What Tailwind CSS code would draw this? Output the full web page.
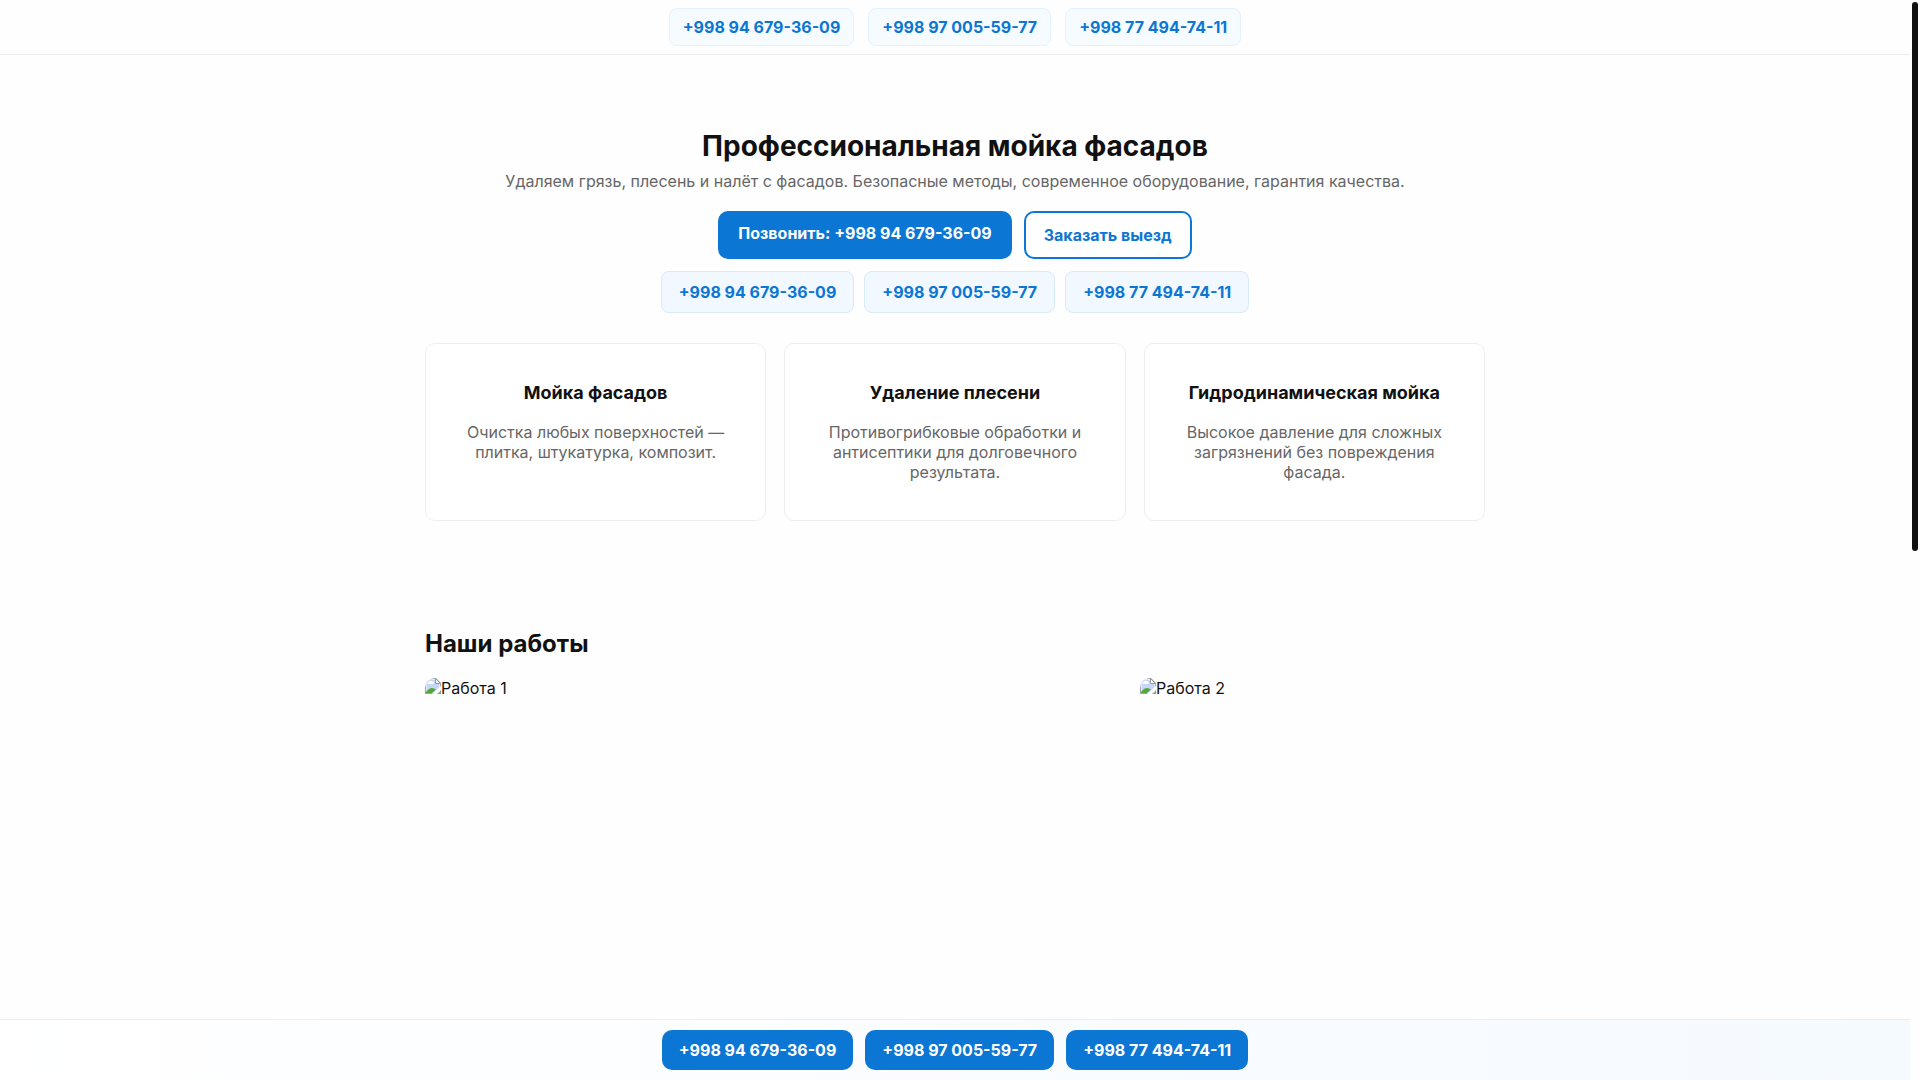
<!DOCTYPE html>
<html lang="ru">
<head>
    <meta charset="utf-8" />
    <meta name="viewport" content="width=device-width, initial-scale=1" />
    <script src="https://cdn.jsdelivr.net/npm/@tailwindcss/browser@4"></script>
    <title>Профессиональная мойка фасадов</title>
</head>
<body class="h-screen overflow-hidden flex bg-[#fefefe] font-['Inter',sans-serif] text-base leading-5 text-[#111]">

    <div class="flex-1 min-w-0 flex flex-col">
        <header class="flex justify-center gap-3.5 py-2 border-b border-[#eee] font-bold text-[#0b76d3]">
            <a href="tel:+998946793609" class="px-[13px] py-2 rounded-lg border border-[#e3f2fd] bg-[#f6fbff]">+998 94 679-36-09</a>
            <a href="tel:+998970055977" class="px-[13px] py-2 rounded-lg border border-[#e3f2fd] bg-[#f6fbff]">+998 97 005-59-77</a>
            <a href="tel:+998774947411" class="px-[13px] py-2 rounded-lg border border-[#e3f2fd] bg-[#f6fbff]">+998 77 494-74-11</a>
        </header>

        <main class="flex-1 min-h-0 w-full max-w-[1100px] mx-auto px-5">
            <section class="pt-[74px] text-center">
                <h1 class="text-[28px] leading-[34px] font-bold">Профессиональная мойка фасадов</h1>
                <p class="mt-2 text-[#666]">Удаляем грязь, плесень и налёт с фасадов. Безопасные методы, современное оборудование, гарантия качества.</p>

                <div class="mt-5 flex justify-center gap-3 font-bold">
                    <a href="tel:+998946793609" class="px-5 py-3 rounded-[10px] bg-[#0b76d3] text-white">Позвонить: +998 94 679-36-09</a>
                    <a href="#order" class="px-[18px] py-3 rounded-[10px] border-2 border-[#0b76d3] bg-white text-[#0b76d3]">Заказать выезд</a>
                </div>

                <div class="mt-3 flex justify-center gap-2.5 font-bold text-[#0b76d3]">
                    <a href="tel:+998946793609" class="px-[17px] py-2.5 rounded-lg border border-[#d6eaf8] bg-[#f1f8ff]">+998 94 679-36-09</a>
                    <a href="tel:+998970055977" class="px-[17px] py-2.5 rounded-lg border border-[#d6eaf8] bg-[#f1f8ff]">+998 97 005-59-77</a>
                    <a href="tel:+998774947411" class="px-[17px] py-2.5 rounded-lg border border-[#d6eaf8] bg-[#f1f8ff]">+998 77 494-74-11</a>
                </div>

                <div class="mt-[30px] grid grid-cols-3 gap-[18px]">
                    <article class="px-9 pt-[37px] pb-[38px] rounded-[10px] border border-[#eee] bg-white">
                        <h3 class="text-lg leading-6 font-bold">Мойка фасадов</h3>
                        <p class="mt-[17px] text-[#666]">Очистка любых поверхностей — плитка, штукатурка, композит.</p>
                    </article>
                    <article class="px-9 pt-[37px] pb-[38px] rounded-[10px] border border-[#eee] bg-white">
                        <h3 class="text-lg leading-6 font-bold">Удаление плесени</h3>
                        <p class="mt-[17px] text-[#666]">Противогрибковые обработки и антисептики для долговечного результата.</p>
                    </article>
                    <article class="px-9 pt-[37px] pb-[38px] rounded-[10px] border border-[#eee] bg-white">
                        <h3 class="text-lg leading-6 font-bold">Гидродинамическая мойка</h3>
                        <p class="mt-[17px] text-[#666]">Высокое давление для сложных загрязнений без повреждения фасада.</p>
                    </article>
                </div>
            </section>

            <section class="pt-[108px]">
                <h2 class="text-2xl leading-[30px] font-bold">Наши работы</h2>
                <div class="mt-[19px] grid grid-cols-[703fr_345fr] gap-3">
                    <div class="flex items-start rounded-t-[10px] overflow-hidden">
                        <svg class="size-4 shrink-0" viewBox="0 0 16 16" aria-hidden="true">
                            <path d="M0 0h11l5 5v11H0z" fill="#a0a4a8" />
                            <path d="M1 1h9.500l4.500 4.500V15H1z" fill="#fff" />
                            <path d="M1.500 1.500h9v4h4V15h-13z" fill="#c6d6fb" />
                            <path d="M3 6a1.300 1.300 0 0 1 .8-2.300 1.900 1.900 0 0 1 3.400 0A1.200 1.200 0 0 1 8 6z" fill="#fff" />
                            <path d="M1 15v-1c2-2.600 4-4 6-4 1.500 0 2.800.7 3.800 1.800L7 15z" fill="#57a639" />
                            <path d="M7 16l9-8v4l-4 4z" fill="#fff" />
                            <path d="M12.500 16l3.500-3.500V16z" fill="#8fa08a" />
                            <path d="M10.500.5v5h5z" fill="#fff" stroke="#999" />
                        </svg>
                        <span>Работа 1</span>
                    </div>
                    <div class="flex items-start rounded-t-[10px] overflow-hidden">
                        <svg class="size-4 shrink-0" viewBox="0 0 16 16" aria-hidden="true">
                            <path d="M0 0h11l5 5v11H0z" fill="#a0a4a8" />
                            <path d="M1 1h9.500l4.500 4.500V15H1z" fill="#fff" />
                            <path d="M1.500 1.500h9v4h4V15h-13z" fill="#c6d6fb" />
                            <path d="M3 6a1.300 1.300 0 0 1 .8-2.300 1.900 1.900 0 0 1 3.400 0A1.200 1.200 0 0 1 8 6z" fill="#fff" />
                            <path d="M1 15v-1c2-2.600 4-4 6-4 1.500 0 2.800.7 3.800 1.800L7 15z" fill="#57a639" />
                            <path d="M7 16l9-8v4l-4 4z" fill="#fff" />
                            <path d="M12.500 16l3.500-3.500V16z" fill="#8fa08a" />
                            <path d="M10.500.5v5h5z" fill="#fff" stroke="#999" />
                        </svg>
                        <span>Работа 2</span>
                    </div>
                </div>
            </section>
        </main>

        <footer class="flex justify-center gap-3 py-2.5 border-t border-[#eee] bg-linear-to-r from-white to-[#f5faff] font-bold text-white">
            <a href="tel:+998946793609" class="px-[17px] py-2.5 rounded-[10px] bg-[#0b76d3]">+998 94 679-36-09</a>
            <a href="tel:+998970055977" class="px-[17px] py-2.5 rounded-[10px] bg-[#0b76d3]">+998 97 005-59-77</a>
            <a href="tel:+998774947411" class="px-[17px] py-2.5 rounded-[10px] bg-[#0b76d3]">+998 77 494-74-11</a>
        </footer>
    </div>

    <!-- scrollbar -->
    <div class="w-2.5 shrink-0 p-0.5" aria-hidden="true">
        <div class="w-1.5 h-[51%] rounded-full bg-[#111]"></div>
    </div>

</body>
</html>
